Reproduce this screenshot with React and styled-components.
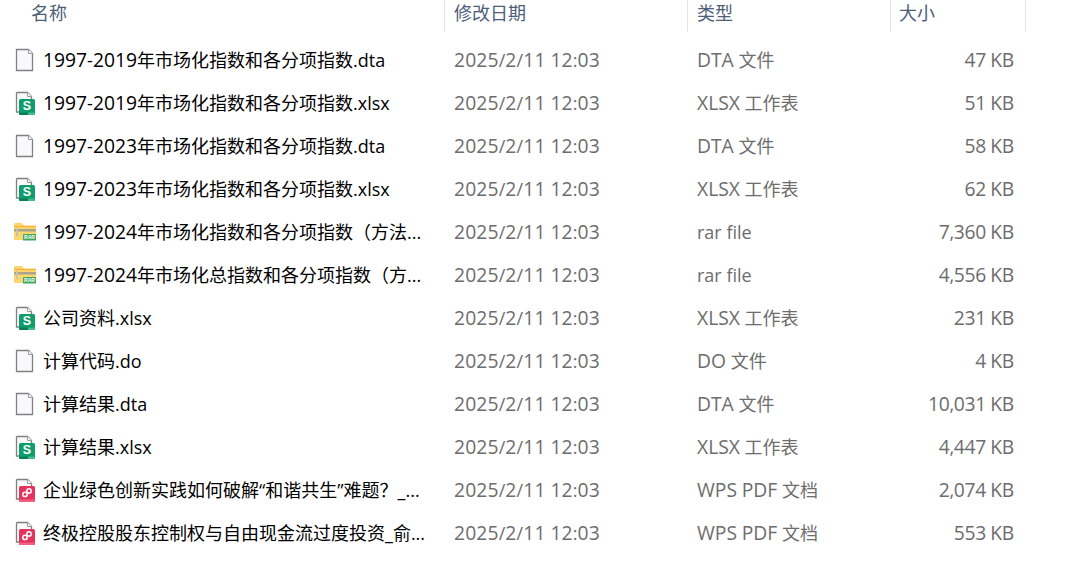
import styled, { createGlobalStyle } from "styled-components";

const Global = createGlobalStyle`
    html, body {
        margin: 0;
        padding: 0;
        background: #fff;
        overflow: hidden;
    }
`

const files = [
    { name: "1997-2019年市场化指数和各分项指数.dta", type: "DTA 文件", size: "47 KB", icon: "blank" },
    { name: "1997-2019年市场化指数和各分项指数.xlsx", type: "XLSX 工作表", size: "51 KB", icon: "sheet" },
    { name: "1997-2023年市场化指数和各分项指数.dta", type: "DTA 文件", size: "58 KB", icon: "blank" },
    { name: "1997-2023年市场化指数和各分项指数.xlsx", type: "XLSX 工作表", size: "62 KB", icon: "sheet" },
    { name: "1997-2024年市场化指数和各分项指数（方法...", type: "rar file", size: "7,360 KB", icon: "rar" },
    { name: "1997-2024年市场化总指数和各分项指数（方...", type: "rar file", size: "4,556 KB", icon: "rar" },
    { name: "公司资料.xlsx", type: "XLSX 工作表", size: "231 KB", icon: "sheet" },
    { name: "计算代码.do", type: "DO 文件", size: "4 KB", icon: "blank" },
    { name: "计算结果.dta", type: "DTA 文件", size: "10,031 KB", icon: "blank" },
    { name: "计算结果.xlsx", type: "XLSX 工作表", size: "4,447 KB", icon: "sheet" },
    { name: "企业绿色创新实践如何破解“和谐共生”难题？_...", type: "WPS PDF 文档", size: "2,074 KB", icon: "pdf" },
    { name: "终极控股股东控制权与自由现金流过度投资_俞...", type: "WPS PDF 文档", size: "553 KB", icon: "pdf" },
];

// digits and capitals run a bit wider than the CJK next to them
const Label = ({ text }) => (
    <span>
        {text.split(/([0-9A-Z]+)/).map((part, i) =>
            i % 2 ? <Wide key={i}>{part}</Wide> : part
        )}
    </span>
);

// page outline cut away where the coloured badge sits on top
const BackPage = () => (
    <>
        <path d="M1.5 2.500h11l4 4v3H4v12.500H1.500z" fill="#f9f9fb" />
        <path d="M1.5 2.500h11l4 4v3M1.500 2.500v19.500h2.500" fill="none" stroke="#808080" strokeWidth="1.300" />
        <path d="M12.500 2.500v4h4" fill="#fff" stroke="#9a9a9a" />
    </>
);

const BlankIcon = () => (
    <IconSvg viewBox="-1 1 22 24">
        <path d="M1.500 2.500h12l4 4v17h-16z" fill="#f9f9fb" stroke="#808080" strokeWidth="1.300" />
        <path d="M13.500 2.500v4h4" fill="#fff" stroke="#9a9a9a" />
    </IconSvg>
);

const SheetIcon = () => (
    <IconSvg viewBox="-1 1 22 24">
        <BackPage />
        <rect x="4" y="9" width="16" height="16" rx="1.500" fill="#0f9d6c" />
        <path d="M4 22.500h9v2.500H5.500A1.500 1.500 0 0 1 4 23.500z" fill="#0b7d55" />
        <path d="M13 22.500h7v1a1.500 1.500 0 0 1-1.500 1.500H13z" fill="#3fbb8e" />
        <Glyph x="12" y="20" fontSize="12.500">S</Glyph>
    </IconSvg>
);

const RarIcon = () => (
    <IconSvg viewBox="0 1 22 24">
        <path d="M0 5.500a1.500 1.500 0 0 1 1.500-1.500H8l2 2.500H20.500A1.500 1.500 0 0 1 22 8v13H1.500A1.500 1.500 0 0 1 0 19.500z" fill="#fbd56e" />
        <path d="M0 7.500h22" stroke="#f2b33c" strokeWidth="1.200" />
        <rect x="0" y="10" width="22" height="2.500" fill="#a9a48c" />
        <rect x="2" y="9" width="2" height="8" fill="#c9c4a8" />
        <rect x="9" y="15" width="13" height="6.500" rx="0.500" fill="#3fa860" />
        <Glyph x="15.500" y="20.200" fontSize="5">RAR</Glyph>
    </IconSvg>
);

const PdfIcon = () => (
    <IconSvg viewBox="-1 1 22 24">
        <BackPage />
        <rect x="4" y="9" width="16" height="16" rx="1.500" fill="#e4335c" />
        <path d="M4 22.500h16v1a1.500 1.500 0 0 1-1.500 1.500h-13A1.500 1.500 0 0 1 4 23.500z" fill="#f0607f" />
        <circle cx="14" cy="14" r="2.200" fill="none" stroke="#fff" strokeWidth="1.500" />
        <circle cx="10" cy="17.400" r="2.200" fill="none" stroke="#fff" strokeWidth="1.500" />
    </IconSvg>
);

const icons = { blank: BlankIcon, sheet: SheetIcon, rar: RarIcon, pdf: PdfIcon };

const App = () => {
    return (
        <Wrap>
            <Global />
            <Header>
                <HeadCell $pad="31px">名称</HeadCell>
                <HeadCell $pad="9px">修改日期</HeadCell>
                <HeadCell $pad="9px">类型</HeadCell>
                <HeadCell $pad="8px">大小</HeadCell>
            </Header>
            <List>
                {files.map((f) => {
                    const Icon = icons[f.icon];
                    return (
                        <Row key={f.name}>
                            <NameCell>
                                <Icon />
                                <Label text={f.name} />
                            </NameCell>
                            <DateCell><Label text="2025/2/11 12:03" /></DateCell>
                            <Cell><Label text={f.type} /></Cell>
                            <SizeCell><Label text={f.size} /></SizeCell>
                        </Row>
                    );
                })}
            </List>
        </Wrap>
    )
}
export default App;

const columns = "445px 243px 203px 135px";

const Wrap = styled.div`
    width: 1066px;
    height: 576px;
    overflow: hidden;
    background: #fff;
    font-family: "Open Sans", "Noto Sans CJK SC", sans-serif;
    font-size: 18px;
`

const Header = styled.div`
    display: grid;
    grid-template-columns: ${columns};
    height: 32px;
`

const HeadCell = styled.div`
    padding: 0 0 7px ${(p) => p.$pad};
    border-right: 1px solid #e5e5e5;
    color: #4c607a;
    font-family: "Noto Sans CJK SC", sans-serif;
    line-height: 25px;
    box-sizing: border-box;
`

const List = styled.div`
    margin-top: 7px;
`

const Row = styled.div`
    display: grid;
    grid-template-columns: ${columns};
    height: 43px;
    align-items: center;
    white-space: nowrap;
`

const NameCell = styled.div`
    display: flex;
    align-items: center;
    padding-left: 14px;
    color: #000;
    gap: 7px;

    span {
        line-height: 24px;
        margin-bottom: 1px;
    }
`

const Cell = styled.div`
    padding: 0 0 2px 9px;
    color: #6d6d6d;
    line-height: 24px;
`

const DateCell = styled(Cell)`
    letter-spacing: 0.13px;
`

const SizeCell = styled(Cell)`
    text-align: right;
    padding-right: 12px;
    letter-spacing: -0.3px;
`

const Wide = styled.span`
    font-size: 19.3px;
`

const IconSvg = styled.svg`
    width: 22px;
    height: 24px;
    flex: none;
    margin-bottom: 1px;
    overflow: visible;
`

const Glyph = styled.text`
    fill: #fff;
    font-family: "Liberation Sans", sans-serif;
    font-weight: 700;
    text-anchor: middle;
`
